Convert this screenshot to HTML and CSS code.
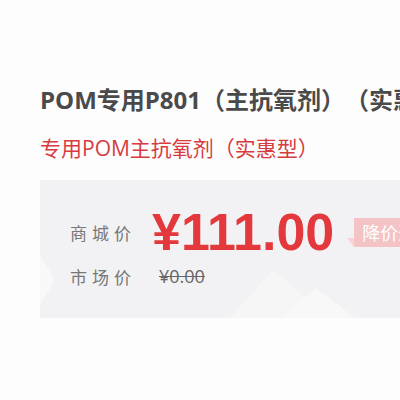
FILE: index.html
```html
<!DOCTYPE html>
<html lang="zh-CN">
<head>
    <meta charset="UTF-8">
    <title>POM专用P801</title>
    <link rel="stylesheet" href="styles.css">
</head>
<body>
    <div class="product">
        <h1 class="product-name">POM专用P801（主抗氧剂）（实惠型）</h1>
        <p class="product-desc">专用POM主抗氧剂（实惠型）</p>

        <div class="price-box">
            <svg class="price-bg" width="360" height="138" viewBox="0 0 360 138">
                <polygon points="0,75 15,100 0,125" fill="#f8f8f9"/>
                <polygon points="190,138 233,90 290,138" fill="#f6f6f7"/>
                <polygon points="240,138 276,108 315,138" fill="#f8f8f9"/>
            </svg>
            <div class="price-row">
                <span class="price-label">商城价</span>
                <span class="price-now">¥111.00</span>
                <span class="price-notice">降价通知</span>
            </div>
            <div class="price-row">
                <span class="price-label">市场价</span>
                <span class="price-old">¥0.00</span>
            </div>
        </div>
    </div>
</body>
</html>
```

FILE: styles.css
```css
body {
    margin: 0;
    background-color: #fdfdfd;
    font-family: "Open Sans", "Noto Sans CJK SC", sans-serif;
    overflow: hidden;
    text-spacing-trim: space-all;
}
.product {
    padding: 84px 0 0 40px;
    overflow: hidden;
}
.product-name {
    margin: 0;
    font-size: 24px;
    line-height: 32px;
    font-weight: bold;
    color: #4a4a4a;
    white-space: nowrap;
}
.product-desc {
    margin: 18px 0 0 0;
    font-size: 21px;
    line-height: 28px;
    color: #d73a40;
    white-space: nowrap;
}
.price-box {
    position: relative;
    margin-top: 18px;
    height: 138px;
    background-color: #f2f2f4;
    padding: 23px 0 0 30px;
    box-sizing: border-box;
    white-space: nowrap;
}
.price-bg {
    position: absolute;
    left: 0;
    top: 0;
}
.price-row {
    position: relative;
    display: flex;
    align-items: center;
}
.price-row span {
    flex-shrink: 0;
}
.price-label {
    width: 82px;
    font-family: "Noto Sans CJK SC", sans-serif;
    font-size: 17px;
    letter-spacing: 5px;
    color: #777777;
}
.price-now {
    font-family: "Liberation Sans", Arial, sans-serif;
    font-size: 52px;
    font-weight: bold;
    line-height: 58px;
    color: #e4393c;
}
.price-notice {
    position: relative;
    margin-left: 20px;
    padding: 0 8px;
    height: 29px;
    line-height: 29px;
    font-family: "Noto Sans CJK SC", sans-serif;
    font-size: 18px;
    color: #ffffff;
    background-color: #f3c3c5;
}
.price-notice::before {
    content: "";
    position: absolute;
    left: -7px;
    bottom: 0;
    border-style: solid;
    border-width: 0 7px 9px 0;
    border-color: transparent #f6d3d4 transparent transparent;
}
.price-old {
    margin-left: 7px;
    font-size: 18px;
    line-height: 30px;
    color: #666666;
    text-decoration: line-through;
}
```
